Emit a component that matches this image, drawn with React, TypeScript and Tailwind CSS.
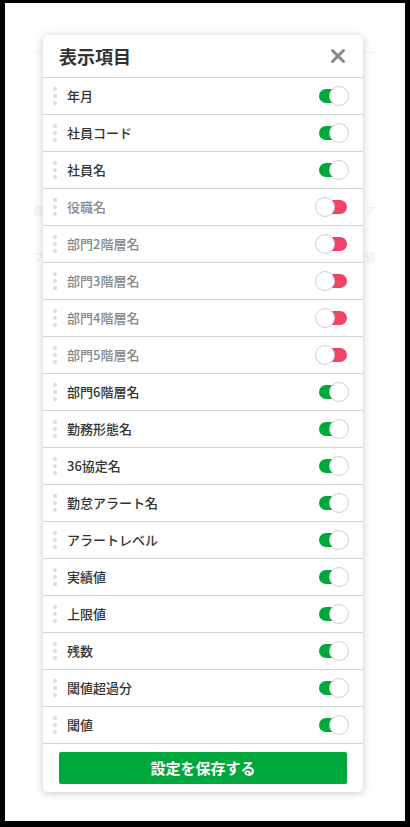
import { X } from 'lucide-react';

type Item = { label: string; on: boolean };

const ITEMS: Item[] = [
  { label: '年月', on: true },
  { label: '社員コード', on: true },
  { label: '社員名', on: true },
  { label: '役職名', on: false },
  { label: '部門2階層名', on: false },
  { label: '部門3階層名', on: false },
  { label: '部門4階層名', on: false },
  { label: '部門5階層名', on: false },
  { label: '部門6階層名', on: true },
  { label: '勤務形態名', on: true },
  { label: '36協定名', on: true },
  { label: '勤怠アラート名', on: true },
  { label: 'アラートレベル', on: true },
  { label: '実績値', on: true },
  { label: '上限値', on: true },
  { label: '残数', on: true },
  { label: '閾値超過分', on: true },
  { label: '閾値', on: true },
];

const font = { fontFamily: '"Noto Sans CJK JP", "Noto Sans", sans-serif' };

function Toggle({ on }: { on: boolean }) {
  return (
    <div className="relative w-[34px] h-[20px] shrink-0">
      <div
        className={`absolute left-[4px] right-[2px] top-[3px] h-[14px] rounded-full ${
          on ? 'bg-[#00a73c]' : 'bg-[#ef4468]'
        }`}
      />
      <div
        className={`absolute top-0 w-[20px] h-[20px] rounded-full bg-white border border-[#cfcfcf] ${
          on ? 'right-0' : 'left-0'
        }`}
      />
    </div>
  );
}

function DragHandle() {
  return (
    <div className="flex flex-col gap-[3px] w-[4px] shrink-0">
      <span className="w-[4px] h-[4px] rounded-full bg-[#dcdcdc]" />
      <span className="w-[4px] h-[4px] rounded-full bg-[#dcdcdc]" />
      <span className="w-[4px] h-[4px] rounded-full bg-[#dcdcdc]" />
    </div>
  );
}

function Row({ item }: { item: Item }) {
  return (
    <div className="flex items-center h-[37px] border-b border-[#d4d4d4] pl-[10px] pr-[14px]">
      <DragHandle />
      <span
        className={`ml-[10px] flex-1 text-[13px] font-medium ${
          item.on ? 'text-[#333]' : 'text-[#888]'
        }`}
      >
        {item.label}
      </span>
      <Toggle on={item.on} />
    </div>
  );
}

export default function App() {
  return (
    <div className="w-[410px] h-[827px] bg-black pt-[3px] pl-[5px] pr-[5px] pb-[6px]" style={font}>
      <div className="relative h-full bg-white overflow-hidden">
        {/* faint page behind the dialog, only the edges peek out */}
        <div className="pt-[49px] px-[30px]">
          <div className="border-t border-[#f3f3f3]" />
        </div>
        <div className="mt-[152px] flex justify-between pl-[28px] pr-[30px] text-[10px] text-[#eeeeee] leading-[12px]">
          <span>務</span>
          <span>ア</span>
        </div>
        <div className="mt-[34px] flex justify-between pl-[28px] pr-[30px] text-[10px] text-[#eeeeee] leading-[12px]">
          <span>フ</span>
          <span>値</span>
        </div>

        <div className="absolute left-[38px] top-[32px] w-[320px] bg-white rounded-[5px] shadow-[0_1px_8px_rgba(0,0,0,0.22)] overflow-hidden">
          <div className="flex items-center justify-between h-[43px] border-b border-[#d4d4d4] pl-[16px] pr-[14px]">
            <span className="text-[18px] font-bold text-[#333]">表示項目</span>
            <X className="w-[22px] h-[22px] text-[#888]" strokeWidth={3.2} />
          </div>
          {ITEMS.map((item) => (
            <Row key={item.label} item={item} />
          ))}
          <div className="px-[16px] pt-[8px] pb-[8px]">
            <button className="w-full h-[32px] rounded-[2px] bg-[#00a73c] text-white text-[15px] font-bold">
              設定を保存する
            </button>
          </div>
        </div>
      </div>
    </div>
  );
}
